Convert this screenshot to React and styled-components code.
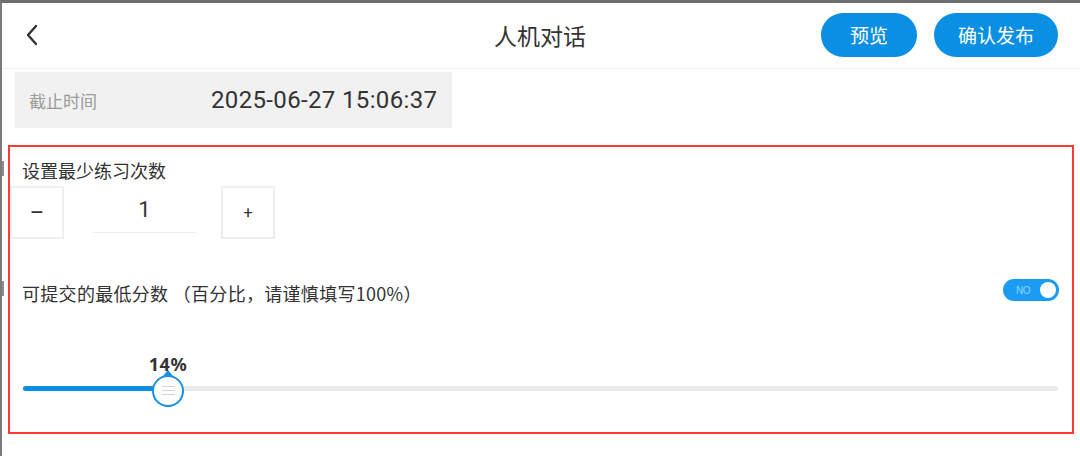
import React from "react";
import styled, { createGlobalStyle } from "styled-components";

const Global = createGlobalStyle`
  html, body { margin: 0; padding: 0; background: #fff; }
  body { font-family: "Noto Sans CJK SC", "Noto Sans", Roboto, sans-serif; color: #333; }
  * { box-sizing: border-box; }
`;

const Frame = styled.div`
  position: relative;
  width: 1080px;
  height: 456px;
  border-top: 3px solid #6e6e6e;
  border-left: 2px solid #7a7a7a;
  overflow: hidden;
`;

const SideMark = styled.div`
  position: absolute;
  left: -2px;
  top: ${(p) => p.$top}px;
  width: 4px;
  height: 15px;
  background: #8a8a8a;
`;

const Header = styled.header`
  height: 66px;
  display: grid;
  grid-template-columns: 1fr auto 1fr;
  align-items: center;
  padding: 0 22px 0 18px;
  border-bottom: 1px solid #f0f0f0;
`;

const BackButton = styled.button`
  justify-self: start;
  border: none;
  background: none;
  padding: 0;
  width: 24px;
  height: 24px;
  display: flex;
  align-items: center;
  justify-content: center;
  margin-top: -2px;
`;

const Title = styled.h1`
  margin: 0;
  font-size: 23px;
  font-weight: 400;
  color: #333;
  margin-left: 2px;
  margin-top: -2px;
`;

const Actions = styled.div`
  justify-self: end;
  display: flex;
  gap: 17px;
`;

const PillButton = styled.button`
  height: 44px;
  width: ${(p) => p.$w}px;
  border: none;
  border-radius: 22px;
  background: #0a8fe3;
  color: #fff;
  font-family: inherit;
  font-size: 19px;
  padding: 0;
  margin-top: -2px;
`;

const DateRow = styled.div`
  margin: 3px 0 0 13px;
  width: 437px;
  height: 56px;
  background: #f1f1f1;
  display: flex;
  align-items: center;
  padding: 0 14px;
`;

const DateLabel = styled.span`
  font-size: 17px;
  color: #9a9a9a;
  width: 182px;
`;

const DateValue = styled.span`
  font-family: Roboto, "Noto Sans", sans-serif;
  font-size: 24px;
  color: #333;
  letter-spacing: 0.35px;
`;

const Panel = styled.section`
  margin: 17px 0 0 6px;
  width: 1066px;
  height: 289px;
  border: 2px solid #ff3b30;
  display: flex;
  flex-direction: column;
`;

const FieldLabel = styled.div`
  font-size: 18px;
  color: #333;
  padding-left: 12px;
  line-height: 24px;
  letter-spacing: ${(p) => p.$ls || 0}px;
`;

const Stepper = styled.div`
  display: flex;
  align-items: center;
  margin-top: 4px;
`;

const StepButton = styled.button`
  width: 54px;
  height: 53px;
  background: #fff;
  border: 2px solid #efefef;
  font-family: Roboto, sans-serif;
  font-size: ${(p) => p.$fs}px;
  color: #333;
  padding: 0;
  display: flex;
  align-items: center;
  justify-content: center;
`;

const StepValue = styled.div`
  width: 103px;
  margin: 0 25px 0 29px;
  height: 40px;
  border-bottom: 1px solid #ececec;
  text-align: center;
  font-family: Roboto, sans-serif;
  font-size: 22px;
  line-height: 34px;
  color: #333;
`;

const ScoreRow = styled.div`
  display: flex;
  align-items: center;
  justify-content: space-between;
  margin-top: 42px;
  padding-right: 13px;
`;

const Toggle = styled.div`
  width: 56px;
  height: 22px;
  border-radius: 11px;
  background: #1b9cf2;
  display: flex;
  align-items: center;
  justify-content: space-between;
  padding: 0 3px 0 13px;
  margin-top: -6px;
`;

const ToggleText = styled.span`
  font-family: "Liberation Sans", Arial, sans-serif;
  font-size: 10px;
  color: #8fd6f5;
  letter-spacing: -0.5px;
`;

const Knob = styled.span`
  width: 16px;
  height: 16px;
  border-radius: 50%;
  background: #fff;
`;

const SliderWrap = styled.div`
  position: relative;
  margin: 81px 14px 0 13px;
  height: 5px;
  border-radius: 3px;
  background: #ebebeb;
`;

const SliderFill = styled.div`
  height: 100%;
  border-radius: 3px;
  background: #0a8fe3;
`;

const Thumb = styled.div`
  position: absolute;
  top: 50%;
  width: 32px;
  height: 32px;
  margin-left: -16px;
  margin-top: -14px;
  border-radius: 50%;
  background: #fff;
  border: 2px solid #1a90e0;
  display: flex;
  flex-direction: column;
  align-items: center;
  justify-content: center;
  gap: 3px;
  &::before {
    content: "";
    position: absolute;
    top: -7px;
    left: 50%;
    margin-left: -5px;
    border-left: 5px solid transparent;
    border-right: 5px solid transparent;
    border-bottom: 6px solid #1a90e0;
  }
`;

const Grip = styled.span`
  width: 13px;
  height: 1px;
  background: #d4d4d4;
`;

const ThumbLabel = styled.div`
  position: absolute;
  bottom: 15px;
  transform: translateX(-50%);
  font-family: "Noto Sans", Roboto, sans-serif;
  font-weight: 700;
  font-size: 18px;
  color: #333;
  letter-spacing: 0.6px;
`;

function ChevronLeft() {
  return (
    <svg width="14" height="22" viewBox="0 0 14 22">
      <path d="M11 2 L3 11 L11 20" fill="none" stroke="#333" strokeWidth="2.4" strokeLinecap="round" strokeLinejoin="round" />
    </svg>
  );
}

export default function App() {
  const value = 14;
  const thumbX = 145;
  return (
    <>
      <Global />
      <Frame>
        <SideMark $top={158} />
        <SideMark $top={278} />
        <Header>
          <BackButton aria-label="返回"><ChevronLeft /></BackButton>
          <Title>人机对话</Title>
          <Actions>
            <PillButton $w={96}>预览</PillButton>
            <PillButton $w={124}>确认发布</PillButton>
          </Actions>
        </Header>
        <DateRow>
          <DateLabel>截止时间</DateLabel>
          <DateValue>2025-06-27 15:06:37</DateValue>
        </DateRow>
        <Panel>
          <FieldLabel style={{ marginTop: 11 }}>设置最少练习次数</FieldLabel>
          <Stepper>
            <StepButton $fs={22}>–</StepButton>
            <StepValue>1</StepValue>
            <StepButton $fs={16}>+</StepButton>
          </Stepper>
          <ScoreRow>
            <FieldLabel $ls={0.3}>可提交的最低分数 （百分比，请谨慎填写100%）</FieldLabel>
            <Toggle>
              <ToggleText>NO</ToggleText>
              <Knob />
            </Toggle>
          </ScoreRow>
          <SliderWrap>
            <SliderFill style={{ width: thumbX }} />
            <Thumb style={{ left: thumbX }}>
              <Grip />
              <Grip />
              <Grip />
            </Thumb>
            <ThumbLabel style={{ left: thumbX }}>{value}%</ThumbLabel>
          </SliderWrap>
        </Panel>
      </Frame>
    </>
  );
}
